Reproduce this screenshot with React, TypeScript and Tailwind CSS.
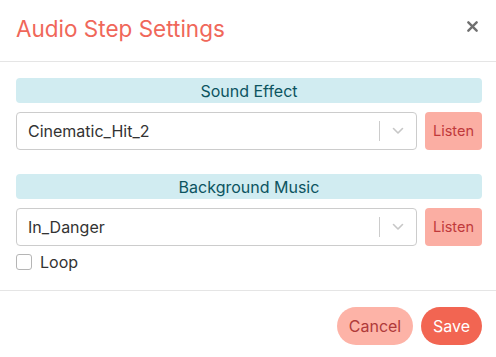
import React from "react";

function Chevron() {
  return (
    <svg width="12" height="8" viewBox="0 0 12 8" fill="none">
      <path d="M1.5 1.5 L6 6 L10.5 1.5" stroke="#c7c7c7" strokeWidth="1.6" strokeLinecap="round" strokeLinejoin="round" />
    </svg>
  );
}

function SelectRow({ value }: { value: string }) {
  return (
    <div className="flex gap-[8px] h-[38px]">
      <div className="flex-1 flex items-center border border-[#cccccc] rounded-[4px] bg-white">
        <span className="flex-1 pl-[11px] text-[16px] text-[#333333]">{value}</span>
        <span className="w-px h-[20px] bg-[#cccccc]" />
        <span className="w-[36px] flex items-center justify-center">
          <Chevron />
        </span>
      </div>
      <button className="w-[57px] rounded-[4px] bg-[#fbaea3] text-[#c0393b] text-[14.5px]">Listen</button>
    </div>
  );
}

export default function App() {
  return (
    <div className="w-[496px] h-[357px] bg-white flex flex-col" style={{ fontFamily: "Inter, 'Noto Sans', sans-serif" }}>
      <div className="h-[62px] shrink-0 flex items-center justify-between pl-[16px] pr-[18px] border-b border-[#e5e5e5]">
        <h1 className="text-[22.5px] text-[#f0675a] leading-none pb-[2px]">Audio Step Settings</h1>
        <svg width="11" height="11" viewBox="0 0 12 12" className="mb-[9px]">
          <path d="M1.5 1.5 L10.5 10.5 M10.5 1.5 L1.5 10.5" stroke="#707070" strokeWidth="2.6" strokeLinecap="round" />
        </svg>
      </div>
      <div className="h-[229px] shrink-0 pl-[16px] pr-[14px] pt-[16px] border-b border-[#e5e5e5] flex flex-col">
        <div className="h-[25px] shrink-0 rounded-[4px] bg-[#d1ecf1] text-[#0c5460] text-[16px] flex items-center justify-center">Sound Effect</div>
        <div className="mt-[9px]">
          <SelectRow value="Cinematic_Hit_2" />
        </div>
        <div className="mt-[24px] h-[25px] shrink-0 rounded-[4px] bg-[#d1ecf1] text-[#0c5460] text-[16px] flex items-center justify-center">Background Music</div>
        <div className="mt-[9px]">
          <SelectRow value="In_Danger" />
        </div>
        <label className="mt-[8px] h-[16px] flex items-center gap-[8px] text-[16px] text-[#333333]">
          <span className="w-[16px] h-[16px] border border-[#b5b5b5] rounded-[3px] bg-white" />
          Loop
        </label>
      </div>
      <div className="flex-1 flex items-start justify-end gap-[8px] pr-[14px] pt-[16px]">
        <button className="w-[76px] h-[38px] rounded-full bg-[#fdb3a7] text-[#b03a3a] text-[16px]">Cancel</button>
        <button className="w-[61px] h-[38px] rounded-full bg-[#f26552] text-white text-[16px]">Save</button>
      </div>
    </div>
  );
}
